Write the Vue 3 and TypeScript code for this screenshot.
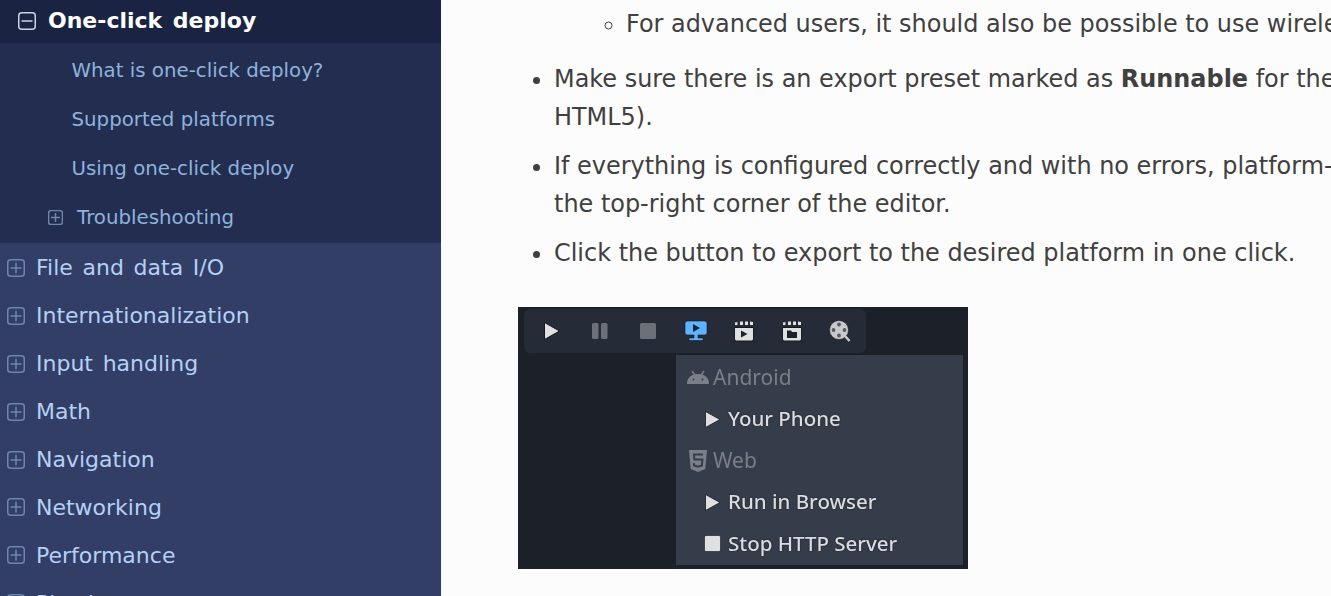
<script setup lang="ts">
const subItems = ['What is one-click deploy?', 'Supported platforms', 'Using one-click deploy']
const topItems = ['File and data I/O', 'Internationalization', 'Input handling', 'Math', 'Navigation', 'Networking', 'Performance', 'Physics']
</script>

<template>
  <div class="page">
    <nav class="sidebar">
      <div class="current">
        <svg class="box big" viewBox="0 0 18 18"><rect x="0.75" y="0.75" width="16.5" height="16.5" rx="3" /><path d="M3.5 9h11" /></svg>
        <span>One-click deploy</span>
      </div>
      <div class="sub">
        <a v-for="s in subItems" :key="s" class="sub-row">{{ s }}</a>
        <a class="sub-row tree">
          <svg class="box small" viewBox="0 0 15 15"><rect x="0.6" y="0.6" width="13.8" height="13.8" rx="2.5" /><path d="M7.5 3v9M3 7.5h9" /></svg>
          <span>Troubleshooting</span>
        </a>
      </div>
      <div class="top-list">
        <a v-for="t in topItems" :key="t" class="top-row">
          <svg class="box big" viewBox="0 0 18 18"><rect x="0.75" y="0.75" width="16.5" height="16.5" rx="3" /><path d="M9 3.5v11M3.5 9h11" /></svg>
          <span>{{ t }}</span>
        </a>
      </div>
    </nav>

    <main class="content">
      <ul class="list">
        <li class="nested-host">
          <ul class="nested">
            <li>For advanced users, it should also be possible to use wireless ADB.</li>
          </ul>
        </li>
        <li>Make sure there is an export preset marked as <strong>Runnable</strong> for the target platform (Android,<br />HTML5).</li>
        <li>If everything is configured correctly and with no errors, platform-specific icons will appear in<br />the top-right corner of the editor.</li>
        <li>Click the button to export to the desired platform in one click.</li>
      </ul>

      <div class="shot">
        <div class="toolbar">
          <svg class="tool" viewBox="0 0 24 24"><path d="M4.500 3.500 19.500 12 4.500 20.500z" fill="#e0e0e0" stroke="#15181e" stroke-width="1" stroke-linejoin="round" /></svg>
          <svg class="tool" viewBox="0 0 24 24"><rect x="4" y="4" width="6.500" height="16" rx="1.500" fill="#6c7079" /><rect x="13" y="4" width="6.500" height="16" rx="1.500" fill="#6c7079" /></svg>
          <svg class="tool" viewBox="0 0 24 24"><rect x="4" y="4" width="16" height="16" rx="1.500" fill="#6c7079" /></svg>
          <svg class="tool monitor" viewBox="0 0 24 24"><path d="M1 4.500Q1 2 3.500 2h17Q23 2 23 4.500v9Q23 16 20.500 16H14v3h5v2.500H5V19h5v-3H3.500Q1 16 1 13.500z" fill="#5fb2ff" stroke="#15181e" stroke-width=".6" /><path d="M9 5l7 4-7 4z" fill="#1d2530" /></svg>
          <svg class="tool" viewBox="0 0 24 24"><path d="M2.500 8.500h19v11.500q0 2-2 2h-15q-2 0-2-2z" fill="#e0e0e0" stroke="#15181e" /><path d="M3 3.500l2.500-.5v3H3zM8 2.500h3v3.500H8zM13 2.500h3v3.500h-3zM18 2.500l3 .5v3h-3z" fill="#e0e0e0" /><path d="M9 11.500l6.500 3.500L9 18.500z" fill="#1c2129" /></svg>
          <svg class="tool" viewBox="0 0 24 24"><path d="M2.500 8.500h19v11.500q0 2-2 2h-15q-2 0-2-2z" fill="#e0e0e0" stroke="#15181e" /><path d="M3 3.500l2.500-.5v3H3zM8 2.500h3v3.500H8zM13 2.500h3v3.500h-3zM18 2.500l3 .5v3h-3z" fill="#e0e0e0" /><path d="M7 11.500h4l1 1.500h5v6H7z" fill="#1c2129" /></svg>
          <svg class="tool" viewBox="0 0 24 24"><circle cx="11" cy="11" r="9.500" fill="#c9c9c9" stroke="#15181e" stroke-width=".6" /><path d="M17 17l4.500 5" stroke="#c9c9c9" stroke-width="2.500" /><circle cx="11" cy="5.500" r="1.900" fill="#555a65" /><circle cx="11" cy="16.500" r="1.900" fill="#555a65" /><circle cx="5.500" cy="11" r="1.900" fill="#555a65" /><circle cx="16.500" cy="11" r="1.900" fill="#555a65" /></svg>
        </div>
        <div class="menu">
          <div class="menu-head">
            <svg class="head-icon" viewBox="0 0 24 24"><path d="M1 18C1 11 6 8 12 8s11 3 11 10z" fill="#7b7f87" /><path d="M6 5l3 4M18 5l-3 4" stroke="#7b7f87" stroke-width="1.500" /><circle cx="7.500" cy="13.500" r="1" fill="#363d4a" /><circle cx="16.500" cy="13.500" r="1" fill="#363d4a" /></svg>
            <span>Android</span>
          </div>
          <div class="menu-item">
            <svg class="item-icon" viewBox="0 0 17 17"><path d="M1.500 .5 16 8.500 1.500 16.500z" fill="#e0e0e0" stroke="#15181e" stroke-width=".8" stroke-linejoin="round" /></svg>
            <span>Your Phone</span>
          </div>
          <div class="menu-head">
            <svg class="head-icon" viewBox="0 0 24 24"><path d="M3 1h18l-1.700 19L12 23l-7.300-3z" fill="#7b7f87" /><path d="M17 5.500H8l.4 5h8l-.5 6-3.900 1.300L8 16.500l-.2-2.300" fill="none" stroke="#363d4a" stroke-width="2" /></svg>
            <span>Web</span>
          </div>
          <div class="menu-item">
            <svg class="item-icon" viewBox="0 0 17 17"><path d="M1.500 .5 16 8.500 1.500 16.500z" fill="#e0e0e0" stroke="#15181e" stroke-width=".8" stroke-linejoin="round" /></svg>
            <span>Run in Browser</span>
          </div>
          <div class="menu-item">
            <svg class="item-icon" viewBox="0 0 17 17"><rect x="0.500" y="0.500" width="16" height="16" rx="1.500" fill="#e0e0e0" stroke="#15181e" stroke-width=".6" /></svg>
            <span>Stop HTTP Server</span>
          </div>
        </div>
      </div>
    </main>
  </div>
</template>

<style>
html, body { margin: 0; overflow: hidden; background: #fcfcfc; }
</style>

<style scoped>
.page {
  display: flex;
  width: 1331px;
  height: 596px;
  overflow: hidden;
  font-family: "DejaVu Sans", Verdana, sans-serif;
  background: #fcfcfc;
}
.sidebar {
  flex: 0 0 441px;
  height: 596px;
  overflow: hidden;
  background: #333e66;
  font-size: 22px;
}
.box { fill: none; flex: none; }
.box rect, .box path { stroke: #6b87ab; stroke-width: 1.5; }
.big { width: 18px; height: 18px; }
.small { width: 15px; height: 15px; }
.current {
  display: flex;
  align-items: center;
  gap: 12px;
  height: 41px;
  padding-left: 18px;
  padding-bottom: 2px;
  background: #1a2342;
  color: #fff;
  font-weight: 700;
  word-spacing: 3px;
}
.current .box rect, .current .box path { stroke: #c9d4e8; }
.sub { background: #222d50; padding: 3px 0 1px; }
.sub-row {
  display: flex;
  align-items: center;
  height: 49px;
  padding-left: 71.500px;
  font-size: 19.800px;
  color: #8fb3dc;
}
.sub-row.tree { padding-left: 48px; gap: 14px; }
.top-list { padding-top: 1px; }
.top-row {
  display: flex;
  align-items: center;
  gap: 11px;
  height: 47.900px;
  padding-left: 7px;
  color: #b3d1f5;
  word-spacing: 2.700px;
}
.content {
  flex: 1;
  min-width: 0;
  overflow: hidden;
  padding: 5px 0 0 77px;
  color: #404040;
  font-size: 23.950px;
  line-height: 38px;
}
.list { margin: 0 0 0 -1px; padding: 0 0 0 37px; white-space: nowrap; }
.list > li { margin-bottom: 11px; }
.list > li.nested-host { list-style: none; margin-bottom: 17px; }
.nested { list-style: circle; margin: 0; padding: 0 0 0 72px; }
.shot {
  display: flex;
  flex-direction: column;
  align-items: flex-start;
  width: 450px;
  height: 262px;
  margin-top: 35px;
  box-sizing: border-box;
  padding: 2px 5px 4px 6px;
  background: #1c2129;
  font-family: "Noto Sans", sans-serif;
  line-height: 1;
  filter: blur(0.4px);
}
.toolbar {
  display: flex;
  align-items: center;
  gap: 24px;
  width: 342px;
  height: 44px;
  box-sizing: border-box;
  padding-left: 16px;
  background: #252b37;
  border-radius: 6px;
}
.tool { width: 24px; height: 24px; flex: none; }
.menu {
  flex: 1;
  align-self: flex-end;
  width: 287px;
  margin-top: 2px;
  box-sizing: border-box;
  padding: 2px 0 0 10px;
  background: #363d4a;
  display: flex;
  flex-direction: column;
}
.menu-head, .menu-item {
  display: flex;
  align-items: center;
  height: 41.500px;
  font-size: 21px;
}
.menu-head { color: #7b7f87; gap: 3px; }
.menu-item {
  color: #dcdde0;
  padding-left: 18px;
  gap: 7px;
  font-size: 20.500px;
  font-weight: 500;
  text-shadow: 0 0 1.500px #10131a;
}
.menu-item span { margin-top: -2px; }
.head-icon { width: 24px; height: 24px; flex: none; }
.item-icon { width: 17px; height: 17px; flex: none; }
</style>
